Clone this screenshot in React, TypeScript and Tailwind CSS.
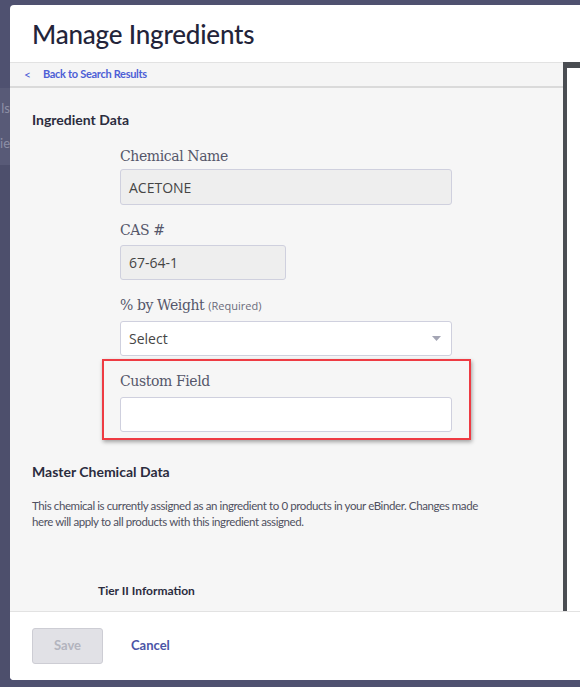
import React from "react";

export default function App() {
  const sans = { fontFamily: "Lato, 'Open Sans', sans-serif" };
  const serif = { fontFamily: "'DejaVu Serif', serif" };
  const inputFont = { fontFamily: "'Open Sans', sans-serif" };
  return (
    <div className="w-[580px] h-[687px] bg-[#4f5170] flex flex-col pt-[5px] pb-[7px] overflow-hidden" style={sans}>
      <div className="flex flex-1 min-h-0">
        {/* left strip of the page behind the modal */}
        <div className="w-[10px] flex flex-col overflow-hidden">
          <div className="h-[83px] bg-[#4f5170]" />
          <div className="h-[77px] bg-[#585a77] flex flex-col items-end text-[13px] text-[#8d8fa6] leading-none">
            <span className="mt-[14px] whitespace-nowrap">ls</span>
            <span className="mt-[22px] whitespace-nowrap">ie</span>
          </div>
          <div className="flex-1 bg-[#4d4f6c]" />
        </div>

        {/* modal */}
        <div className="flex-1 flex flex-col bg-white rounded-l-[4px] overflow-hidden">
          <div className="h-[57px] flex items-center pl-[22px] shrink-0">
            <h1 className="text-[26px] font-medium text-[#23243a] tracking-[-0.2px] leading-none">Manage Ingredients</h1>
          </div>
          <div className="flex flex-1 min-h-0">
            <div className="flex-1 flex flex-col bg-[#f6f6f6]">
              <div className="h-[26px] shrink-0 border-t border-[#e2e2e2] border-b-2 border-b-[#dadada] bg-[#f5f5f5] flex items-center pl-[14px] text-[11px] font-bold text-[#4d5fd6]">
                <span className="text-[12px] font-normal mr-[12px] leading-none">&lt;</span>
                <span className="tracking-[-0.3px]">Back to Search Results</span>
              </div>
              <div className="flex-1 pl-[22px] pt-[22px]">
                <div className="text-[14px] leading-[20px] font-bold text-[#2b2c3e]">Ingredient Data</div>
                <div className="ml-[88px] w-[332px]">
                  <div className="mt-[16px] text-[14px] leading-[20px] text-[#55566a] tracking-[-0.4px]" style={serif}>Chemical Name</div>
                  <div className="mt-[3px] h-[36px] w-[332px] rounded-[3px] border border-[#cfd0de] bg-[#eeeeee] flex items-center px-[8px] text-[14px] text-[#454545]" style={inputFont}>ACETONE</div>
                  <div className="mt-[15px] text-[14px] leading-[20px] text-[#55566a] tracking-[-0.4px]" style={serif}>CAS #</div>
                  <div className="mt-[5px] h-[35px] w-[166px] rounded-[3px] border border-[#cfd0de] bg-[#eeeeee] flex items-center px-[8px] text-[14px] text-[#454545]" style={inputFont}>67-64-1</div>
                  <div className="mt-[15px] text-[14px] leading-[20px] text-[#55566a] flex items-baseline tracking-[-0.4px]" style={serif}>
                    <span>% by Weight</span>
                    <span className="ml-[4px] text-[11px] text-[#6a6b7a] tracking-normal" style={inputFont}>(Required)</span>
                  </div>
                  <div className="mt-[5px] h-[35px] w-[332px] rounded-[3px] border border-[#cfd0de] bg-white flex items-center justify-between pl-[8px] pr-[10px] text-[14px] text-[#454545]" style={inputFont}>
                    <span>Select</span>
                    <svg width="9" height="5" viewBox="0 0 9 5"><path d="M0 0 L9 0 L4.5 5 Z" fill="#a4a5b4" /></svg>
                  </div>
                  <div className="relative mt-[15px]">
                    <div className="text-[14px] leading-[20px] text-[#55566a] tracking-[-0.4px]" style={serif}>Custom Field</div>
                    <div className="mt-[6px] h-[35px] w-[332px] rounded-[3px] border border-[#cfd0de] bg-white" />
                    <div className="absolute left-[-18px] top-[-12px] w-[369px] h-[81px] border-2 border-[#ee3b43] shadow-[1px_2px_4px_rgba(0,0,0,0.35)] pointer-events-none" />
                  </div>
                </div>
                <div className="mt-[30px] text-[14px] leading-[20px] font-bold text-[#2b2c3e]">Master Chemical Data</div>
                <p className="mt-[16px] w-[462px] text-[11.5px] leading-[16px] text-[#4f5060] tracking-[-0.4px]">
                  This chemical is currently assigned as an ingredient to 0 products in your eBinder. Changes made here will apply to all products with this ingredient assigned.
                </p>
                <div className="mt-[51px] ml-[66px] text-[12px] leading-[20px] font-bold text-[#2b2c3e]">Tier II Information</div>
              </div>
            </div>
            {/* right side panel edge */}
            <div className="w-[17px] shrink-0 border-l-4 border-[#4a4d52] border-t-[6px] border-t-[#4a4d52] bg-white" />
          </div>
          <div className="h-[69px] shrink-0 border-t border-[#e2e2e2] bg-white flex items-center pl-[22px]">
            <button className="w-[71px] h-[36px] rounded-[3px] border border-[#cdcdd4] bg-[#e1e1e6] text-[13px] font-bold text-[#b3b4be]">Save</button>
            <span className="ml-[28px] text-[13px] font-bold text-[#4b55a6]">Cancel</span>
          </div>
        </div>
      </div>
    </div>
  );
}
